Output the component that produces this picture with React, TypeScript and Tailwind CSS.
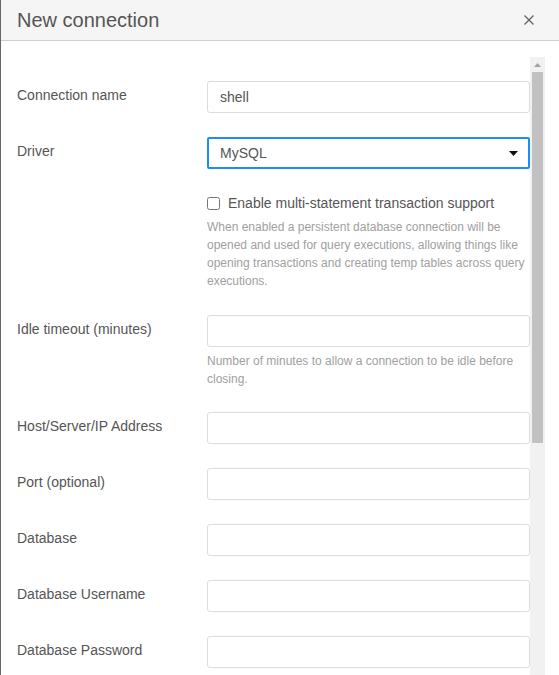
const fields = [
  { label: "Host/Server/IP Address" },
  { label: "Port (optional)" },
  { label: "Database" },
  { label: "Database Username" },
  { label: "Database Password" },
];

function TextInput({ value = "" }: { value?: string }) {
  return (
    <div className="h-[32px] w-full rounded-[3px] border border-[#dcdcdc] bg-white px-[12px] text-[14px] leading-[30px] text-[#555]">
      {value}
    </div>
  );
}

function Row({ label, children }: { label: string; children: React.ReactNode }) {
  return (
    <div className="flex">
      <div className="w-[190px] shrink-0 pt-[4px] text-[14px] leading-[20px] text-[#555]">{label}</div>
      <div className="min-w-0 flex-1">{children}</div>
    </div>
  );
}

function Help({ children }: { children: React.ReactNode }) {
  return <p className="mt-[5px] text-[12px] leading-[18px] text-[#a0a0a0]">{children}</p>;
}

export default function App() {
  return (
    <div
      className="flex h-[675px] w-[559px] flex-col overflow-hidden border-l border-[#666] bg-white"
      style={{ fontFamily: '"Liberation Sans", Arial, sans-serif' }}
    >
      {/* Header */}
      <div className="flex h-[41px] shrink-0 items-center justify-between border-b border-[#d0d0d0] bg-[#f5f5f5] pl-[16px] pr-[25px]">
        <h2 className="text-[20px] leading-[40px] text-[#555]">New connection</h2>
        <svg width="10" height="10" viewBox="0 0 10 10" className="mt-[-1px]">
          <path d="M0.5 0.5 L9.5 9.5 M9.5 0.5 L0.5 9.5" stroke="#666" strokeWidth="1.4" />
        </svg>
      </div>

      {/* Body */}
      <div className="flex min-h-0 flex-1 pl-[16px] pr-[14px] pt-[16px]">
        <div className="flex min-w-0 flex-1 flex-col gap-[24px] pt-[24px]">
          <Row label="Connection name">
            <TextInput value="shell" />
          </Row>

          <Row label="Driver">
            <div className="flex h-[32px] w-full items-center justify-between rounded-[2px] border-2 border-[#1e8cf5] bg-white pl-[11px] pr-[10px] text-[14px] text-[#555]">
              <span>MySQL</span>
              <svg width="9" height="5" viewBox="0 0 9 5">
                <path d="M0 0 H9 L4.5 5 Z" fill="#111" />
              </svg>
            </div>
          </Row>

          <div className="mb-[1px] flex">
            <div className="w-[190px] shrink-0" />
            <div className="min-w-0 flex-1">
              <label className="flex items-center gap-[8px] text-[14px] leading-[20px] text-[#555]">
                <input type="checkbox" className="m-0 h-[13px] w-[13px]" />
                Enable multi-statement transaction support
              </label>
              <Help>
                When enabled a persistent database connection will be opened and used for query executions,
                allowing things like opening transactions and creating temp tables across query executions.
              </Help>
            </div>
          </div>

          <Row label="Idle timeout (minutes)">
            <TextInput />
            <Help>Number of minutes to allow a connection to be idle before closing.</Help>
          </Row>

          {fields.map((f) => (
            <Row key={f.label} label={f.label}>
              <TextInput />
            </Row>
          ))}
        </div>

        {/* Scrollbar */}
        <div className="flex w-[15px] shrink-0 flex-col bg-[#f1f1f1]">
          <div className="flex h-[15px] items-center justify-center">
            <svg width="7" height="4" viewBox="0 0 7 4">
              <path d="M0 4 L3.5 0 L7 4 Z" fill="#a3a3a3" />
            </svg>
          </div>
          <div className="mx-[2px] h-[371px] bg-[#c1c1c1]" />
        </div>
      </div>
    </div>
  );
}
